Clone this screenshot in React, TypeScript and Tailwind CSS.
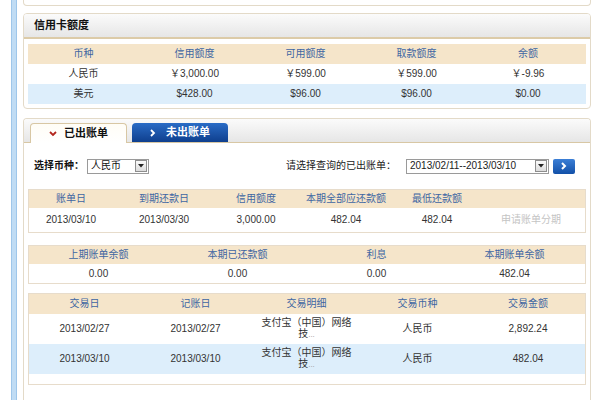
import React from "react";

const font = { fontFamily: '"Liberation Sans", "Noto Sans CJK SC", sans-serif' };

function Cell({ w, children, className = "" }: { w: string; children?: React.ReactNode; className?: string }) {
  return <div className={`${w} shrink-0 flex items-center justify-center text-center whitespace-nowrap ${className}`}>{children}</div>;
}

const limitCols = ["w-[111px]", "w-[111px]", "w-[111px]", "w-[111px]", "w-[112px]"];

function LimitRow({ vals, head, bg }: { vals: string[]; head?: boolean; bg: string }) {
  return (
    <div className={`flex h-[20px] ${bg} ${head ? "text-[#3e66a2]" : "text-[#333]"}`}>
      {vals.map((v, i) => (
        <Cell key={i} w={limitCols[i]}>{v}</Cell>
      ))}
    </div>
  );
}

const bill1Cols = ["w-[84px]", "w-[102px]", "w-[82px]", "w-[98px]", "w-[84px]", "w-[104px]"];
const bill2Cols = ["w-[139px]", "w-[139px]", "w-[139px]", "w-[137px]"];
const txCols = ["w-[111px]", "w-[111px]", "w-[111px]", "w-[111px]", "w-[110px]"];

function Caret() {
  return (
    <div className="w-[12px] h-[12px] mr-[1px] border border-[#8e8e8e] bg-gradient-to-b from-[#fafafa] to-[#dcdcdc] flex items-center justify-center shrink-0">
      <svg width="6" height="4" viewBox="0 0 6 4"><path d="M0 0h6L3 3.5z" fill="#222" /></svg>
    </div>
  );
}

export default function App() {
  return (
    <div className="w-[598px] h-[400px] bg-white overflow-hidden flex text-[10px] leading-none" style={font}>
      <div className="w-[11px] shrink-0" />
      <div className="w-[6px] shrink-0 bg-[#c0dcf4] border-x border-[#9ec6ea]" />
      <div className="w-[6px] shrink-0" />
      <div className="w-[568px] shrink-0 flex flex-col">
        {/* previous panel remnant */}
        <div className="h-[6px] border border-t-0 border-[#e3dac8] rounded-b-[4px]" />
        <div className="h-[7px]" />
        {/* credit limit panel */}
        <div className="h-[96px] border border-[#e3dac8] rounded-[4px] flex flex-col overflow-hidden">
          <div className="h-[25px] bg-gradient-to-b from-[#fbfbfb] to-[#e6e6e6] border-b-2 border-[#dccba8] flex items-center pl-[10px] font-bold text-[11px] text-[#111]">
            信用卡额度
          </div>
          <div className="px-[4px] pt-[5px]">
            <div className="flex flex-col">
              <LimitRow head bg="bg-[#f5e5ca] h-[19px]" vals={["币种", "信用额度", "可用额度", "取款额度", "余额"]} />
              <LimitRow bg="bg-white" vals={["人民币", "￥3,000.00", "￥599.00", "￥599.00", "￥-9.96"]} />
              <LimitRow bg="bg-[#ddeefb]" vals={["美元", "$428.00", "$96.00", "$96.00", "$0.00"]} />
            </div>
          </div>
        </div>
        <div className="h-[9px]" />
        {/* bills panel */}
        <div className="flex-1 border border-b-0 border-[#e3dac8] rounded-t-[4px] flex flex-col overflow-hidden">
          <div className="h-[24px] bg-gradient-to-b from-[#fbfbfb] to-[#e6e6e6] border-b border-[#d8c7a4] flex items-end pl-[6px] gap-[5px] shrink-0">
            <div className="w-[97px] h-[20px] -mb-px bg-gradient-to-b from-[#fffdf6] to-white border border-b-0 border-[#d8c7a4] rounded-t-[4px] flex items-center justify-center gap-[7px] font-bold text-[11px] text-[#111]">
              <svg width="8" height="6" viewBox="0 0 8 6"><path d="M1 1l3 3 3-3" stroke="#b3261e" strokeWidth="1.8" fill="none" /></svg>
              <span>已出账单</span>
            </div>
            <div className="w-[96px] h-[19px] bg-gradient-to-b from-[#2a6cc6] to-[#0f3f8e] rounded-t-[4px] flex items-center justify-center gap-[10px] font-bold text-[11px] text-white">
              <svg width="6" height="8" viewBox="0 0 6 8"><path d="M1 1l3 3-3 3" stroke="#fff" strokeWidth="1.8" fill="none" /></svg>
              <span>未出账单</span>
            </div>
          </div>
          <div className="px-[4px] flex flex-col">
            {/* filter row */}
            <div className="h-[46px] flex items-center whitespace-nowrap">
              <span className="w-[50px] shrink-0 font-bold text-[#111] ml-[6px]">选择币种：</span>
              <div className="ml-[3px] w-[62px] h-[15px] shrink-0 border border-[#9a9a9a] bg-white flex items-center justify-between pl-[3px] text-[#111]">
                <span>人民币</span>
                <Caret />
              </div>
              <span className="ml-[137px] w-[110px] shrink-0 text-[#222]">请选择查询的已出账单：</span>
              <div className="ml-[10px] w-[143px] h-[15px] shrink-0 border border-[#9a9a9a] bg-white flex items-center justify-between pl-[3px] text-[#222]">
                <span>2013/02/11--2013/03/10</span>
                <Caret />
              </div>
              <div className="ml-[4px] w-[22px] h-[15px] shrink-0 rounded-[2px] bg-gradient-to-b from-[#3b7fd6] to-[#1250a8] flex items-center justify-center">
                <svg width="6" height="8" viewBox="0 0 6 8"><path d="M1 1l3 3-3 3" stroke="#fff" strokeWidth="2" fill="none" /></svg>
              </div>
            </div>
            {/* bill summary 1 */}
            <div className="border border-[#e7dccb]">
              <div className="flex h-[18px] bg-[#f5e5ca] text-[#3e66a2]">
                {["账单日", "到期还款日", "信用额度", "本期全部应还款额", "最低还款额", ""].map((v, i) => (
                  <Cell key={i} w={bill1Cols[i]}>{v}</Cell>
                ))}
              </div>
              <div className="flex h-[24px] bg-white text-[#333]">
                {["2013/03/10", "2013/03/30", "3,000.00", "482.04", "482.04"].map((v, i) => (
                  <Cell key={i} w={bill1Cols[i]}>{v}</Cell>
                ))}
                <Cell w={bill1Cols[5]} className="text-[#c4c4c4]">申请账单分期</Cell>
              </div>
            </div>
            <div className="h-[12px]" />
            {/* bill summary 2 */}
            <div className="border border-[#e7dccb]">
              <div className="flex h-[18px] bg-[#f5e5ca] text-[#3e66a2]">
                {["上期账单余额", "本期已还款额", "利息", "本期账单余额"].map((v, i) => (
                  <Cell key={i} w={bill2Cols[i]}>{v}</Cell>
                ))}
              </div>
              <div className="flex h-[19px] bg-white text-[#333]">
                {["0.00", "0.00", "0.00", "482.04"].map((v, i) => (
                  <Cell key={i} w={bill2Cols[i]}>{v}</Cell>
                ))}
              </div>
            </div>
            <div className="h-[9px]" />
            {/* transactions */}
            <div className="border border-[#e7dccb] pb-[10px]">
              <div className="flex h-[20px] bg-[#f5e5ca] text-[#3e66a2]">
                {["交易日", "记账日", "交易明细", "交易币种", "交易金额"].map((v, i) => (
                  <Cell key={i} w={txCols[i]}>{v}</Cell>
                ))}
              </div>
              {[
                ["2013/02/27", "2013/02/27", "2,892.24", "bg-white"],
                ["2013/03/10", "2013/03/10", "482.04", "bg-[#ddeefb]"],
              ].map((r, k) => (
                <div key={k} className={`flex h-[30px] ${r[3]} text-[#333]`}>
                  <Cell w={txCols[0]}>{r[0]}</Cell>
                  <Cell w={txCols[1]}>{r[1]}</Cell>
                  <Cell w={txCols[2]} className="flex-col leading-[11px] -mt-[2px]">
                    <span>支付宝（中国）网络</span>
                    <span>技<span className="text-[#999] text-[8px]">...</span></span>
                  </Cell>
                  <Cell w={txCols[3]}>人民币</Cell>
                  <Cell w={txCols[4]}>{r[2]}</Cell>
                </div>
              ))}
            </div>
          </div>
        </div>
      </div>
    </div>
  );
}
